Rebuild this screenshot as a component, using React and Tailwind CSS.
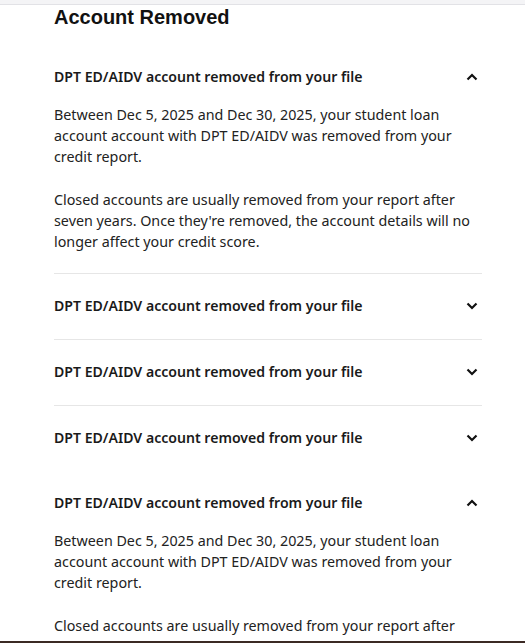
import { useState } from 'react'

const items = [
  { id: 1, open: true, border: true },
  { id: 2, open: false, border: true },
  { id: 3, open: false, border: true },
  { id: 4, open: false, border: false },
  { id: 5, open: true, border: false },
]

function Chevron({ up }) {
  return (
    <svg width="12" height="8" viewBox="0 0 12 8" className="shrink-0">
      {up
        ? <polyline points="1.5,6.5 6,2 10.5,6.5" fill="none" stroke="#111" strokeWidth="2.2" />
        : <polyline points="1.5,1.5 6,6 10.5,1.5" fill="none" stroke="#111" strokeWidth="2.2" />}
    </svg>
  )
}

export default function App() {
  const [openIds, setOpenIds] = useState(items.filter(i => i.open).map(i => i.id))

  const toggle = (id) =>
    setOpenIds(prev => prev.includes(id) ? prev.filter(x => x !== id) : [...prev, id])

  return (
    <div className="h-[643px] overflow-hidden flex flex-col bg-white border-b-2 border-[#3b2a24]" style={{ fontFamily: '"Noto Sans", "Open Sans", sans-serif' }}>
      <div className="h-[5px] shrink-0 bg-[#f4f4f6] border-b border-[#e2e2e6]" />
      <div className="flex-1 overflow-hidden pl-[54px] pr-[43px]">
        <h2 className="text-[20px] leading-[24px] font-bold text-[#111] mb-4" style={{ fontFamily: '"Liberation Sans", Arial, sans-serif' }}>
          Account Removed
        </h2>

        {items.map(item => {
          const open = openIds.includes(item.id)
          return (
            <div key={item.id} className={item.border ? 'border-b border-[#e6e6e6]' : ''}>
              <button
                onClick={() => toggle(item.id)}
                className={`w-full flex items-center justify-between pt-[22px] pr-[4px] text-left ${open ? 'pb-[17px]' : 'pb-[23px]'}`}
              >
                <span className="text-[14.1px] leading-[20px] font-semibold text-[#1a1a1a]">
                  DPT ED/AIDV account removed from your file
                </span>
                <Chevron up={open} />
              </button>
              {open && (
                <div className="pb-[21px] text-[14.3px] leading-[21px] text-[#222]">
                  <p className="mb-[22px]">
                    Between Dec 5, 2025 and Dec 30, 2025, your student loan account account with DPT ED/AIDV was removed from your credit report.
                  </p>
                  <p>
                    Closed accounts are usually removed from your report after seven years. Once they're removed, the account details will no longer affect your credit score.
                  </p>
                </div>
              )}
            </div>
          )
        })}
      </div>
    </div>
  )
}
